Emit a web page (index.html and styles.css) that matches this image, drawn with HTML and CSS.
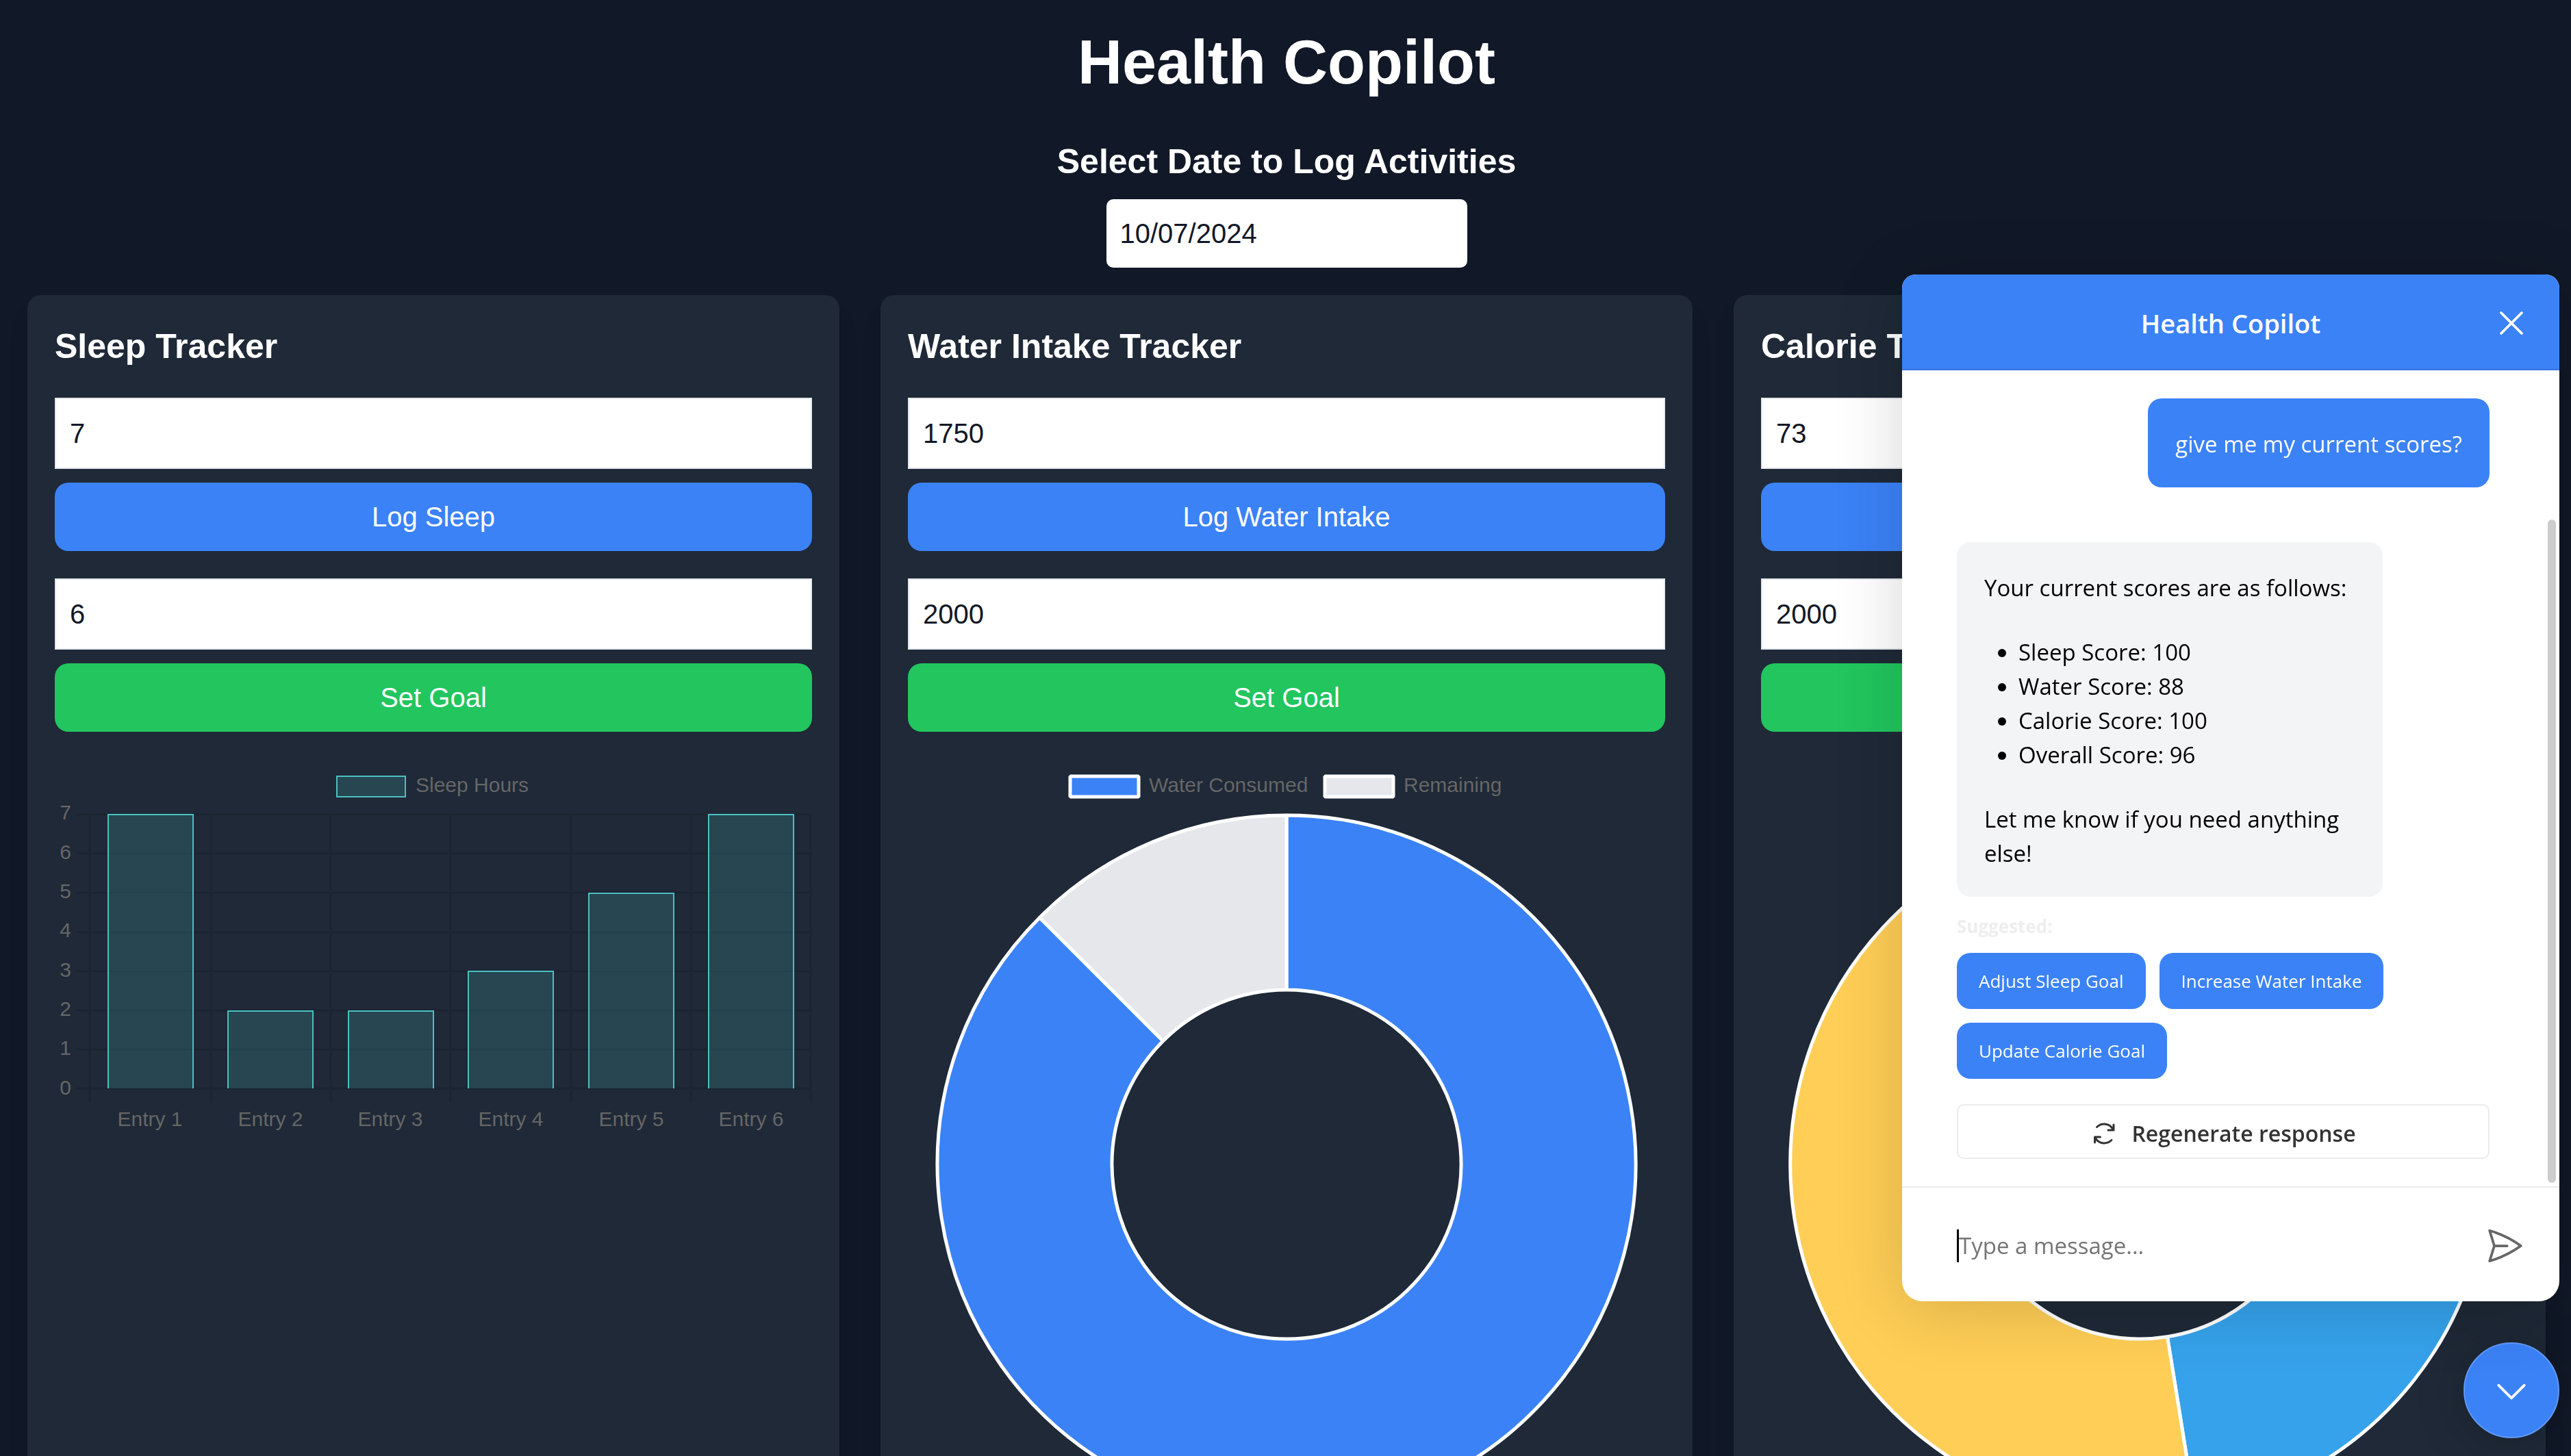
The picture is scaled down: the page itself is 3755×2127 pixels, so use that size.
FILE: index.html
```html
<!DOCTYPE html>
<html lang="en">
<head>
<meta charset="utf-8">
<meta name="viewport" content="width=device-width, initial-scale=1">
<title>Health Copilot</title>
<link rel="stylesheet" href="styles.css">
</head>
<body>
<main class="page">
  <h1 class="page-title">Health Copilot</h1>
  <section class="date-picker">
    <h2><label for="log-date">Select Date to Log Activities</label></h2>
    <input class="date-input" id="log-date" type="text" value="10/07/2024">
  </section>

  <div class="trackers">
    <section class="card">
      <h2>Sleep Tracker</h2>
      <form class="entry">
        <input class="field" type="text" value="7" aria-label="Hours slept">
        <button class="btn btn-log" type="button">Log Sleep</button>
      </form>
      <form class="entry">
        <input class="field" type="text" value="6" aria-label="Sleep goal">
        <button class="btn btn-goal" type="button">Set Goal</button>
      </form>
      <svg class="chart" viewBox="0 0 1106 553" role="img" aria-label="Sleep hours bar chart">
        <rect class="bar" x="412" y="25" width="100" height="30"/>
        <text x="527" y="48">Sleep Hours</text>
        <path class="grid" d="M32 81H1104M32 138H1104M32 195H1104M32 253H1104M32 310H1104M32 367H1104M32 424H1104M32 481H1104M51 81V502M228 81V502M403 81V502M578 81V502M754 81V502M929 81V502M1104 81V502"/>
        <g class="bars">
          <path class="bar" d="M78 481V81H202V481"/>
          <path class="bar" d="M253 481V368H377V481"/>
          <path class="bar" d="M429 481V368H553V481"/>
          <path class="bar" d="M604 481V310H728V481"/>
          <path class="bar" d="M780 481V196H904V481"/>
          <path class="bar" d="M955 481V81H1079V481"/>
        </g>
        <g class="axis-y">
          <text x="24" y="88">7</text>
          <text x="24" y="146">6</text>
          <text x="24" y="203">5</text>
          <text x="24" y="260">4</text>
          <text x="24" y="318">3</text>
          <text x="24" y="375">2</text>
          <text x="24" y="432">1</text>
          <text x="24" y="490">0</text>
        </g>
        <g class="axis-x">
          <text x="139" y="536">Entry 1</text>
          <text x="315" y="536">Entry 2</text>
          <text x="490" y="536">Entry 3</text>
          <text x="666" y="536">Entry 4</text>
          <text x="842" y="536">Entry 5</text>
          <text x="1017" y="536">Entry 6</text>
        </g>
      </svg>
    </section>

    <section class="card">
      <h2>Water Intake Tracker</h2>
      <form class="entry">
        <input class="field" type="text" value="1750" aria-label="Water consumed">
        <button class="btn btn-log" type="button">Log Water Intake</button>
      </form>
      <form class="entry">
        <input class="field" type="text" value="2000" aria-label="Water goal">
        <button class="btn btn-goal" type="button">Set Goal</button>
      </form>
      <svg class="chart" viewBox="0 0 1106 1106" role="img" aria-label="Water intake doughnut chart">
        <rect class="slice water" x="237" y="25" width="100" height="30"/>
        <text x="352" y="48">Water Consumed</text>
        <rect class="slice rest" x="609" y="25" width="100" height="30"/>
        <text x="724" y="48">Remaining</text>
        <path class="slice water" d="M553 82A510 510 0 1 1 192.4 231.4L372.7 411.7A255 255 0 1 0 553 337Z"/>
        <path class="slice rest" d="M192.4 231.4A510 510 0 0 1 553 82V337A255 255 0 0 0 372.7 411.7Z"/>
      </svg>
    </section>

    <section class="card">
      <h2>Calorie Tracker</h2>
      <form class="entry">
        <input class="field" type="text" value="73" aria-label="Calories">
        <button class="btn btn-log" type="button">Log Calories</button>
      </form>
      <form class="entry">
        <input class="field" type="text" value="2000" aria-label="Calorie goal">
        <button class="btn btn-goal" type="button">Set Goal</button>
      </form>
      <svg class="chart" viewBox="0 0 1106 1106" role="img" aria-label="Calorie doughnut chart">
        <path class="slice blue" d="M553 82A510 510 0 0 1 633.9 1095.5L593.5 843.8A255 255 0 0 0 553 337Z"/>
        <path class="slice yellow" d="M633.9 1095.5A510 510 0 1 1 553 82V337A255 255 0 1 0 593.5 843.8Z"/>
      </svg>
    </section>
  </div>
</main>

<button class="launcher" type="button" aria-label="Toggle chat">
  <svg class="icon" viewBox="0 0 24 24"><path d="M19.5 8.25l-7.5 7.5-7.5-7.5"/></svg>
</button>

<aside class="chat" aria-label="Health Copilot chat">
  <header class="chat-header">
    <h2>Health Copilot</h2>
    <button class="icon-btn close" type="button" aria-label="Close">
      <svg class="icon" viewBox="0 0 24 24"><path d="M6 18L18 6M6 6l12 12"/></svg>
    </button>
  </header>
  <div class="messages">
    <p class="bubble user">give me my current scores?</p>
    <div class="bubble assistant">
      <p>Your current scores are as follows:</p>
      <ul>
        <li>Sleep Score: 100</li>
        <li>Water Score: 88</li>
        <li>Calorie Score: 100</li>
        <li>Overall Score: 96</li>
      </ul>
      <p>Let me know if you need anything else!</p>
    </div>
    <h3 class="suggest-title">Suggested:</h3>
    <div class="suggestions">
      <button class="chip" type="button">Adjust Sleep Goal</button>
      <button class="chip" type="button">Increase Water Intake</button>
      <button class="chip" type="button">Update Calorie Goal</button>
    </div>
    <button class="regenerate" type="button">
      <svg class="icon" viewBox="0 0 40 40"><path d="M9.5 10.5C17 3.500 28.500 5 33.500 14.500M34 7V15H26M31 29.500C23 37 11.500 34.500 7 26M6.500 33V25H14.500"/></svg>
      Regenerate response
    </button>
    <span class="scroll-thumb"></span>
  </div>
  <form class="composer">
    <input type="text" placeholder="Type a message..." aria-label="Message">
    <button class="icon-btn send" type="button" aria-label="Send">
      <svg class="icon" viewBox="0 0 24 24"><path d="M6 12L3.269 3.126A59.768 59.768 0 0121.485 12 59.77 59.77 0 013.27 20.876L5.999 12zm0 0h7.5"/></svg>
    </button>
  </form>
</aside>
</body>
</html>
```
FILE: styles.css
```css
* { box-sizing: border-box; margin: 0; padding: 0; }

body {
  background: #111827;
  color: #fff;
  font-family: "Liberation Sans", Arial, sans-serif;
  font-size: 40px;
  line-height: 60px;
}

button, input { font: inherit; border: 0; }
button { cursor: pointer; }
input:focus { outline: none; }

.page {
  height: 100vh;
  overflow: hidden;
  padding: 41px 37px 0 40px;
}

h2 { font-size: 50px; line-height: 70px; font-weight: 700; }

.page-title {
  font-size: 90px;
  line-height: 100px;
  text-align: center;
  margin-bottom: 60px;
}

.date-picker {
  display: flex;
  flex-direction: column;
  align-items: center;
  gap: 20px;
  margin-bottom: 40px;
}

.date-input {
  width: 527px;
  height: 100px;
  padding: 0 20px;
  border-radius: 10px;
  background: #fff;
  color: #111827;
}

.trackers {
  display: grid;
  grid-template-columns: repeat(3, 1fr);
  gap: 60px;
}

.card {
  background: #1f2937;
  border-radius: 20px;
  padding: 40px;
  box-shadow: 0 25px 38px -8px rgba(0, 0, 0, .1), 0 10px 15px -10px rgba(0, 0, 0, .1);
}

.card h2 { margin-bottom: 40px; }

.entry {
  display: flex;
  flex-direction: column;
  gap: 20px;
  margin-bottom: 40px;
}

.field {
  height: 104px;
  padding: 0 20px;
  border: 2px solid #e5e7eb;
  background: #fff;
  color: #111827;
}

.btn { height: 100px; border-radius: 20px; color: #fff; }
.btn-log { background: #3b82f6; }
.btn-goal { background: #22c55e; }

.chart { display: block; width: 100%; height: auto; }
.chart text { font-size: 30px; fill: #666; }
.grid { stroke: rgba(0, 0, 0, .1); stroke-width: 3; fill: none; }
.bar { fill: rgba(75, 192, 192, .2); stroke: #4bc0c0; stroke-width: 2; }
.axis-y text { text-anchor: end; }
.axis-x text { text-anchor: middle; }
.slice { stroke: #fff; stroke-width: 5; stroke-linejoin: bevel; }
.water { fill: #3b82f6; }
.rest { fill: #e5e7eb; }
.blue { fill: #36a2eb; }
.yellow { fill: #ffce56; }

.icon {
  display: block;
  width: 60px;
  height: 60px;
  fill: none;
  stroke: currentColor;
  stroke-width: 1.5;
  stroke-linecap: round;
  stroke-linejoin: round;
}

.icon-btn { background: none; }

.chat {
  position: fixed;
  right: 17px;
  bottom: 226px;
  width: 960px;
  height: 1500px;
  display: flex;
  flex-direction: column;
  background: #fff;
  color: #000;
  border-radius: 20px 20px 30px 30px;
  box-shadow: 0 12px 100px rgba(0, 0, 0, .16);
  font-family: "Segoe UI", "Open Sans", sans-serif;
  font-size: 33px;
  line-height: 50px;
}

.chat-header {
  flex: none;
  display: grid;
  grid-template-columns: 1fr auto 1fr;
  align-items: center;
  height: 140px;
  padding: 4px 40px 0;
  background: #3b82f6;
  color: #fff;
  border-bottom: 2px solid #3575dd;
  border-radius: 20px 20px 0 0;
}

.chat-header h2 { grid-column: 2; font-size: 38px; line-height: 60px; font-weight: 600; }
.close { justify-self: end; color: #fff; }

.messages {
  position: relative;
  flex: 1;
  padding: 41px 102px 40px 80px;
  display: flex;
  flex-direction: column;
  align-items: flex-start;
}

.bubble { padding: 42px 40px 38px; border-radius: 20px; }
.user { align-self: flex-end; background: #3b82f6; color: #fff; margin-bottom: 80px; }
.assistant { display: grid; gap: 44px; width: 622px; background: #f3f4f6; }
.assistant ul { padding-left: 50px; }

.suggest-title { font-size: 26px; line-height: 40px; font-weight: 700; color: #eee; margin: 23px 0 19px; }

.suggestions { display: flex; flex-wrap: wrap; gap: 20px; width: 640px; }

.chip {
  height: 82px;
  padding: 0 32px;
  border-radius: 20px;
  background: #3b82f6;
  color: #fff;
  font-size: 26px;
}

.regenerate {
  display: flex;
  align-items: center;
  justify-content: center;
  gap: 20px;
  align-self: stretch;
  flex: none;
  height: 80px;
  margin-top: 37px;
  padding-top: 6px;
  border: 2px solid #ebebeb;
  border-radius: 10px;
  background: #fff;
  color: #333;
  font-size: 32px;
  font-weight: 600;
}

.regenerate .icon { width: 40px; height: 40px; stroke-width: 3; }

.scroll-thumb {
  position: absolute;
  top: 218px;
  right: 5px;
  bottom: 5px;
  width: 12px;
  border-radius: 6px;
  background: #ccc;
}

.composer {
  flex: none;
  display: flex;
  align-items: center;
  gap: 40px;
  height: 168px;
  padding: 4px 50px 0 80px;
  border-top: 2px solid #ebebeb;
}

.composer input {
  flex: 1;
  min-width: 0;
  height: 48px;
  border-left: 3px solid #000;
  background: none;
  color: #000;
}

.composer input::placeholder { color: #757575; opacity: 1; }
.send { color: #666; }

.launcher {
  position: fixed;
  right: 17px;
  bottom: 26px;
  width: 140px;
  height: 140px;
  padding-top: 4px;
  display: grid;
  place-items: center;
  border: 2px solid #6098f6;
  border-radius: 50%;
  background: #3b82f6;
  color: #fff;
  box-shadow: 0 2px 15px rgba(0, 0, 0, .06), 0 5px 80px rgba(0, 0, 0, .16);
}
```
